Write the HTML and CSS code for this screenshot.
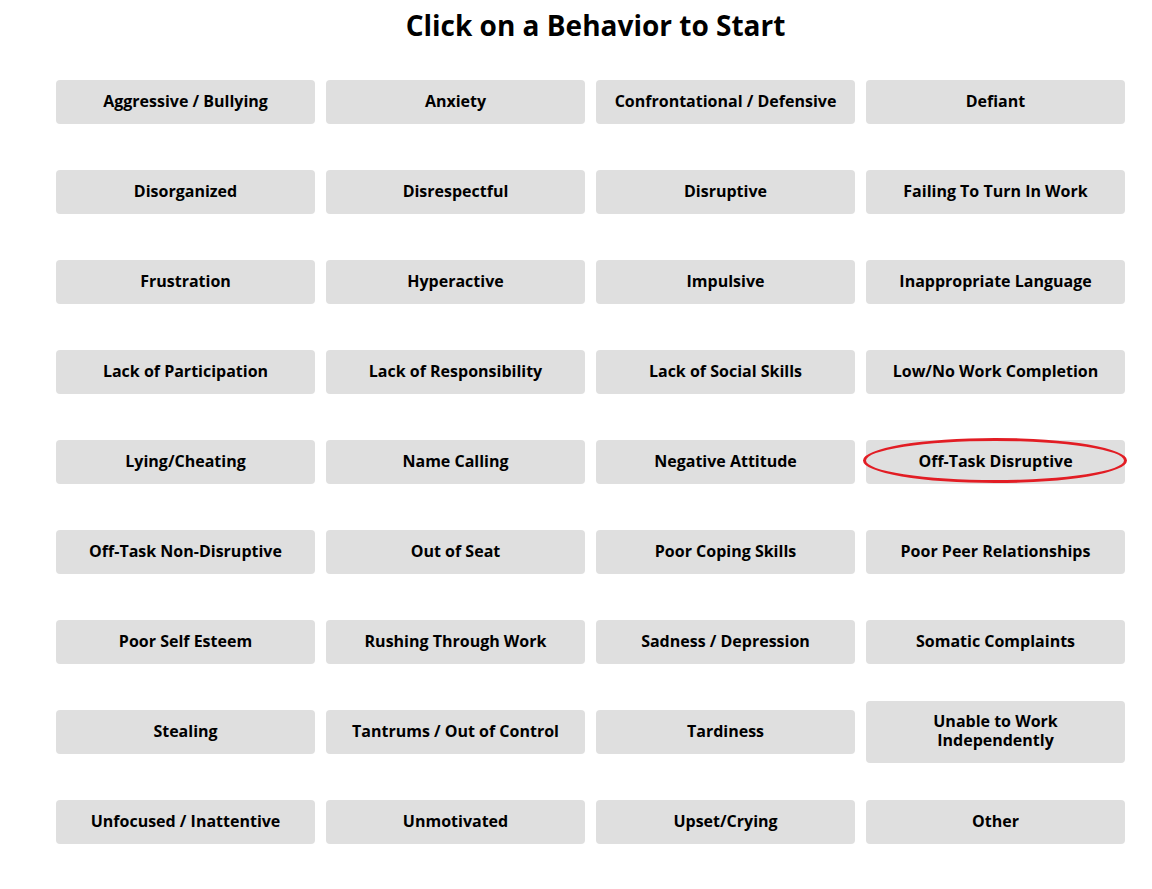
FILE: index.html
```html
<!DOCTYPE html>
<html lang="en">
<head>
<meta charset="utf-8">
<title>Behaviors</title>
<link rel="stylesheet" href="styles.css">
</head>
<body>
<h1 class="title">Click on a Behavior to Start</h1>
<div class="grid">
  <button class="btn">Aggressive / Bullying</button>
  <button class="btn">Anxiety</button>
  <button class="btn">Confrontational / Defensive</button>
  <button class="btn">Defiant</button>
  <button class="btn">Disorganized</button>
  <button class="btn">Disrespectful</button>
  <button class="btn">Disruptive</button>
  <button class="btn">Failing To Turn In Work</button>
  <button class="btn">Frustration</button>
  <button class="btn">Hyperactive</button>
  <button class="btn">Impulsive</button>
  <button class="btn">Inappropriate Language</button>
  <button class="btn">Lack of Participation</button>
  <button class="btn">Lack of Responsibility</button>
  <button class="btn">Lack of Social Skills</button>
  <button class="btn">Low/No Work Completion</button>
  <button class="btn">Lying/Cheating</button>
  <button class="btn">Name Calling</button>
  <button class="btn">Negative Attitude</button>
  <button class="btn btn-marked">Off-Task Disruptive<span class="ring"></span></button>
  <button class="btn">Off-Task Non-Disruptive</button>
  <button class="btn">Out of Seat</button>
  <button class="btn">Poor Coping Skills</button>
  <button class="btn">Poor Peer Relationships</button>
  <button class="btn">Poor Self Esteem</button>
  <button class="btn">Rushing Through Work</button>
  <button class="btn">Sadness / Depression</button>
  <button class="btn">Somatic Complaints</button>
  <button class="btn">Stealing</button>
  <button class="btn">Tantrums / Out of Control</button>
  <button class="btn">Tardiness</button>
  <button class="btn btn-two">Unable to Work<br>Independently</button>
  <button class="btn">Unfocused / Inattentive</button>
  <button class="btn">Unmotivated</button>
  <button class="btn">Upset/Crying</button>
  <button class="btn">Other</button>
</div>
</body>
</html>
```
FILE: styles.css
```css
html, body {
  margin: 0;
  padding: 0;
  background: #ffffff;
}
body {
  font-family: "Open Sans", "Liberation Sans", sans-serif;
  color: #000;
}
.title {
  margin: 6px 0 13px;
  padding-left: 39px;
  font-size: 28px;
  line-height: 38px;
  font-weight: 700;
  text-align: center;
}
.grid {
  display: grid;
  grid-template-columns: repeat(4, 259px);
  grid-auto-rows: 90px;
  column-gap: 11px;
  align-items: center;
  margin-left: 56px;
}
.btn {
  position: relative;
  display: block;
  box-sizing: border-box;
  width: 259px;
  min-height: 44px;
  padding: 11px 8px 13px;
  border: none;
  border-radius: 4px;
  background: #dfdfdf;
  font-family: "Open Sans", "Liberation Sans", sans-serif;
  font-size: 16px;
  line-height: 19px;
  font-weight: 700;
  color: #000;
  text-align: center;
  cursor: pointer;
}
.ring {
  position: absolute;
  left: -3px;
  top: -2px;
  width: 264px;
  height: 45px;
  box-sizing: border-box;
  border: 3px solid #e21d24;
  border-radius: 50%;
  pointer-events: none;
}
```
